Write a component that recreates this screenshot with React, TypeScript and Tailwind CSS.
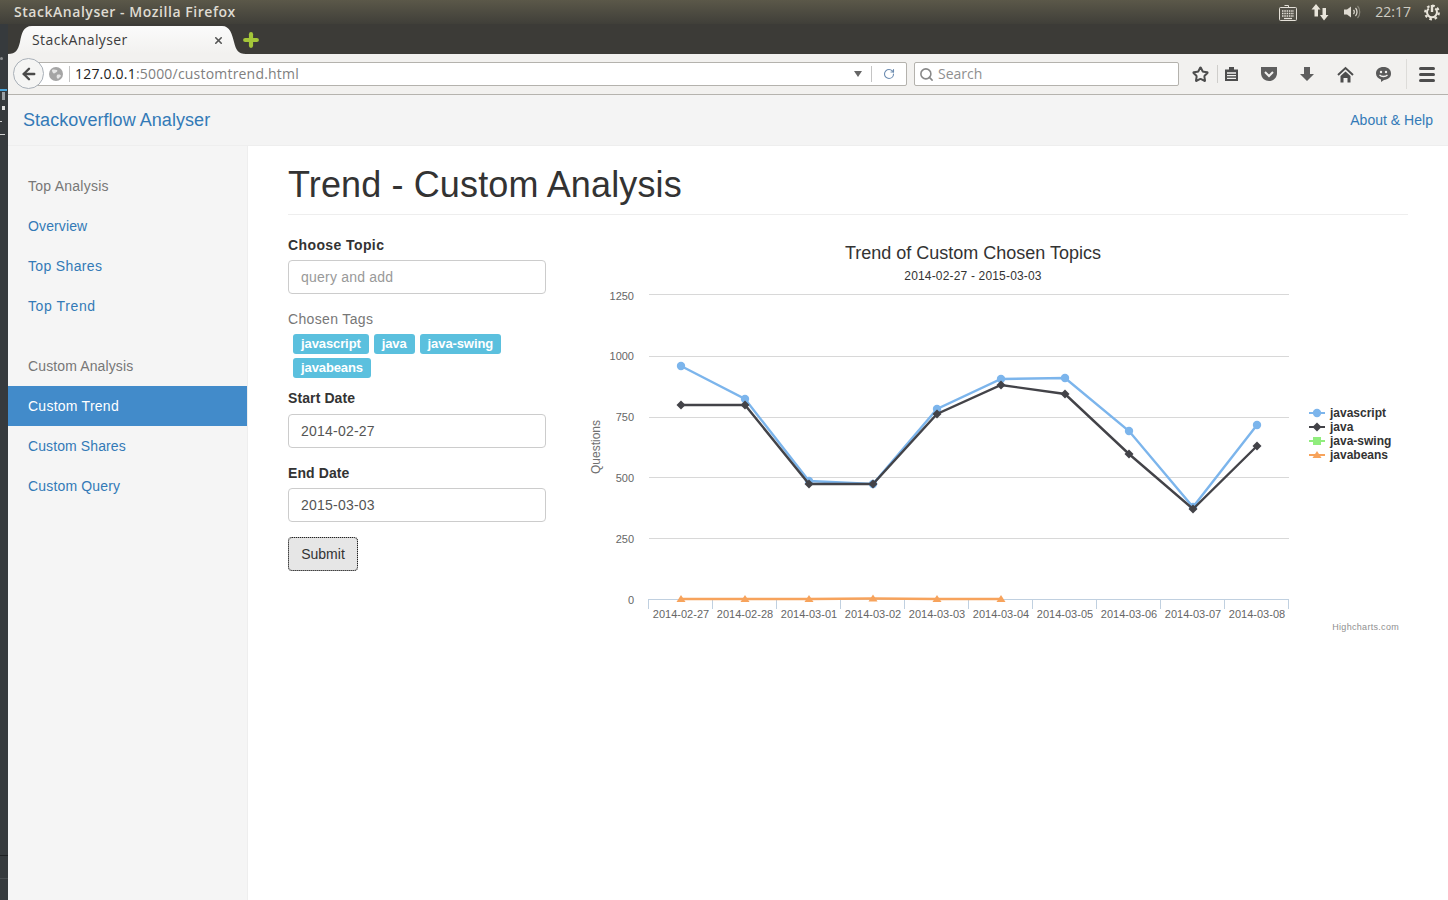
import type { ReactNode } from 'react';
import { ArrowLeft, RotateCw, Search, Star, X, Plus } from 'lucide-react';

const sans = "font-['Liberation_Sans',Arial,sans-serif]";
const ubuntu = "font-['Open_Sans','DejaVu_Sans',sans-serif]";

const xs = [681, 745, 809, 873, 937, 1001, 1065, 1129, 1193, 1257];
const jsY = [366, 399, 481, 484, 409, 379, 378, 431, 507, 425];
const javaY = [405, 405, 484, 484, 414, 385, 394, 454, 509, 446];
const beansY = [599, 599, 599, 598.5, 599, 599];
const dates = ['2014-02-27', '2014-02-28', '2014-03-01', '2014-03-02', '2014-03-03', '2014-03-04', '2014-03-05', '2014-03-06', '2014-03-07', '2014-03-08'];
const yTicks = [
  { label: '1250', y: 294.5, ty: 300 },
  { label: '1000', y: 356.5, ty: 360 },
  { label: '750', y: 417.5, ty: 421 },
  { label: '500', y: 477.5, ty: 482 },
  { label: '250', y: 538.5, ty: 543 },
  { label: '0', y: 599.5, ty: 604 },
];

function pts(ys: number[]) {
  return ys.map((y, i) => `${xs[i]},${y}`).join(' ');
}

function Chart() {
  // viewBox uses page coordinates so the numbers read straight off the screenshot
  return (
    <svg width="820" height="410" viewBox="588 235 820 410" className="block" fontFamily="Liberation Sans, Arial, sans-serif">
      <text x="973" y="259" textAnchor="middle" fontSize="18" fill="#333333">Trend of Custom Chosen Topics</text>
      <text x="973" y="280" textAnchor="middle" fontSize="12" letterSpacing="0.17" fill="#333333">2014-02-27 - 2015-03-03</text>
      <text transform="translate(600 447) rotate(-90)" textAnchor="middle" fontSize="12" fill="#707070">Questions</text>
      {yTicks.map((t) => (
        <g key={t.label}>
          {t.label !== '0' && <line x1="649" x2="1289" y1={t.y} y2={t.y} stroke="#d8d8d8" />}
          <text x="634" y={t.ty} textAnchor="end" fontSize="11" fill="#666666">{t.label}</text>
        </g>
      ))}
      <line x1="648" x2="1289" y1="599.5" y2="599.5" stroke="#c0d0e0" />
      {[...xs.map((x) => x - 32.5), 1288.5].map((x) => (
        <line key={x} x1={x} x2={x} y1="600" y2="609" stroke="#c0d0e0" />
      ))}
      {dates.map((d, i) => (
        <text key={d} x={xs[i]} y="618" textAnchor="middle" fontSize="11" fill="#666666">{d}</text>
      ))}

      <polyline points={pts(jsY)} fill="none" stroke="#7cb5ec" strokeWidth="2.4" />
      {jsY.map((y, i) => <circle key={i} cx={xs[i]} cy={y} r="4.2" fill="#7cb5ec" />)}

      <polyline points={pts(javaY)} fill="none" stroke="#434348" strokeWidth="2.4" />
      {javaY.map((y, i) => (
        <polygon key={i} points={`${xs[i]},${y - 4.5} ${xs[i] + 4.5},${y} ${xs[i]},${y + 4.5} ${xs[i] - 4.5},${y}`} fill="#434348" />
      ))}

      <polyline points={pts(beansY)} fill="none" stroke="#f7a35c" strokeWidth="2.4" />
      {beansY.map((y, i) => (
        <polygon key={i} points={`${xs[i]},${y - 4} ${xs[i] + 4.5},${y + 3} ${xs[i] - 4.5},${y + 3}`} fill="#f7a35c" />
      ))}

      {/* legend */}
      <g fontSize="12" fontWeight="700" fill="#333333">
        <line x1="1309" x2="1325" y1="413" y2="413" stroke="#7cb5ec" strokeWidth="2" />
        <circle cx="1317" cy="413" r="4.2" fill="#7cb5ec" />
        <text x="1330" y="417">javascript</text>
        <line x1="1309" x2="1325" y1="427" y2="427" stroke="#434348" strokeWidth="2" />
        <polygon points="1317,422.5 1321.5,427 1317,431.5 1312.5,427" fill="#434348" />
        <text x="1330" y="431">java</text>
        <line x1="1309" x2="1325" y1="441" y2="441" stroke="#90ed7d" strokeWidth="2" />
        <rect x="1313" y="437" width="8" height="8" fill="#90ed7d" />
        <text x="1330" y="445">java-swing</text>
        <line x1="1309" x2="1325" y1="455" y2="455" stroke="#f7a35c" strokeWidth="2" />
        <polygon points="1317,451 1321.5,458 1312.5,458" fill="#f7a35c" />
        <text x="1330" y="459">javabeans</text>
      </g>
      <text x="1399" y="630" textAnchor="end" fontSize="9" letterSpacing="0.3" fill="#909090">Highcharts.com</text>
    </svg>
  );
}

function TitleBar() {
  return (
    <div className={`h-6 flex items-center bg-gradient-to-b from-[#5b5849] to-[#403f39] text-[#dfdbd2] ${ubuntu}`}>
      <span className="ml-3.5 text-sm font-semibold tracking-[0.54px]">StackAnalyser - Mozilla Firefox</span>
      <div className="ml-auto flex items-center">
        <svg width="18" height="18" viewBox="0 0 18 18" className="mr-[14px]" fill="none" stroke="#e4e0d8">
          <path d="M9.5 4.500V2.500H5.500" />
          <rect x="0.5" y="4.500" width="17" height="13" rx="1" fill="#55534a" />
          <path d="M3 8h12M3 10.500h12M3 13h12" strokeWidth="1.500" strokeDasharray="1.500 0.800" />
          <path d="M5 15.500h8" strokeWidth="1.200" />
        </svg>
        <svg width="18" height="18" viewBox="0 0 18 18" className="mr-[14px]" fill="#e8e4da">
          <path d="M5 1l4.500 5.500H7v7H3.500v-7H.5z" />
          <path d="M13 17.500l4.500-5.500H15V5h-3.500v7H9z" />
        </svg>
        <svg width="18" height="18" viewBox="0 0 18 18" className="mr-[14px]" fill="none">
          <path d="M1 6.500h3l4-3v11l-4-3H1z" fill="#dfdbd2" />
          <path d="M10.500 7c1 1 1 3 0 4M12.500 5c2 2 2 6 0 8" stroke="#dfdbd2" strokeWidth="1.300" />
          <path d="M14.500 3c3 3 3 9 0 12" stroke="#8a877c" strokeWidth="1.200" />
        </svg>
        <span className="text-sm text-[#cfccc2] mr-[12px]">22:17</span>
        <svg width="18" height="18" viewBox="0 0 18 18" className="mr-[7px]" fill="none" stroke="#e8e4da">
          <circle cx="9" cy="9.500" r="6.800" strokeWidth="2.200" strokeDasharray="2.600 2.740" />
          <path d="M5.700 5.500a5 5 0 1 0 6.600 0" strokeWidth="2" />
          <path d="M9 2v7" strokeWidth="2.400" />
        </svg>
      </div>
    </div>
  );
}

function TabBar() {
  return (
    <div className={`h-[30px] flex bg-[#3c3b37] ${ubuntu}`}>
      <div className="relative mt-[2px] w-[238px] h-[28px] flex items-center text-[#3c3c3c]">
        <svg width="238" height="28" viewBox="0 0 238 28" className="absolute inset-0">
          <defs>
            <linearGradient id="tabFill" x1="0" y1="0" x2="0" y2="1">
              <stop offset="0" stopColor="#fbfbfb" />
              <stop offset="1" stopColor="#f2f1ef" />
            </linearGradient>
          </defs>
          <path d="M0 28C8 28 10 24 12 16 13.500 8 15 0 24 0H214C222 0 224 8 226 16 228 24 230 28 238 28Z" fill="url(#tabFill)" />
        </svg>
        <span className="relative ml-[24px] text-sm tracking-[0.4px]">StackAnalyser</span>
        <X size={11} strokeWidth={3.5} className="relative ml-auto mr-[22px] text-[#555]" />
      </div>
      <Plus size={20} strokeWidth={5} className="mt-[6px] -ml-[5px] text-[#a4c639]" />
    </div>
  );
}

function NavBar() {
  return (
    <div className={`h-[41px] flex items-center bg-[#f2f1ef] border-b border-[#b5b3ae] ${ubuntu}`}>
      <div className="relative ml-[12px] w-[887px] h-[24px] bg-white border border-[#b4b2ad] rounded-r-[2px] flex items-center">
        <div className="absolute -left-[8px] -top-[5px] w-[31px] h-[31px] rounded-full bg-[#f5f5f4] border border-[#a9b0b8] flex items-center justify-center">
          <ArrowLeft size={18} strokeWidth={3.2} className="text-[#4a4a4a]" />
        </div>
        <svg width="14" height="14" viewBox="0 0 14 14" className="ml-[28px]">
          <circle cx="7" cy="7" r="7" fill="#a5a5a5" />
          <path d="M3 3c2-1 3 0 5 0 1 1 0 2-2 3-1 1-3 0-3-3zM8 8c2-1 4 0 4 1l-3 3c-1-1-2-2-1-4z" fill="#e6e6e6" />
        </svg>
        <div className="ml-[6px] h-[16px] w-px bg-[#c4c4c4]" />
        <span className="ml-[5px] text-sm tracking-[0.2px] text-[#222]">127.0.0.1<span className="text-[#808080]">:5000/customtrend.html</span></span>
        <svg width="8" height="6" viewBox="0 0 8 6" className="ml-auto mr-[9px]"><path d="M0 0h8L4 6z" fill="#666" /></svg>
        <div className="h-[16px] w-px bg-[#c4c4c4]" />
        <RotateCw size={12} strokeWidth={2.2} className="mx-[11px] text-[#6b8bb0]" />
      </div>
      <div className="ml-[7px] w-[265px] h-[24px] bg-white border border-[#b4b2ad] rounded-[2px] flex items-center text-[#8f8f8f]">
        <Search size={15} strokeWidth={2.5} className="ml-[4px] text-[#888]" />
        <span className="ml-[4px] text-sm">Search</span>
      </div>
      <div className="flex-1 flex items-center text-[#4d4d4d]">
        <Star size={17} strokeWidth={2.8} className="ml-[13px]" />
        <div className="ml-[8px] h-[18px] w-px bg-[#cfcecb]" />
        <svg width="15" height="16" viewBox="0 0 15 16" className="ml-[6px]" fill="#4d4d4d">
          <path d="M1 3.500h13V15H1z" /><path d="M5 1h5v3.500H5z" />
          <path d="M3 7h9M3 9.700h9M3 12.400h9" stroke="#f2f1ef" strokeWidth="1.300" />
        </svg>
        <svg width="18" height="16" viewBox="0 0 18 16" className="ml-[21px]">
          <path d="M1 1h16v6c0 5-4 8-8 8s-8-3-8-8z" fill="#5e5e5e" />
          <path d="M5 6l4 4 4-4" fill="none" stroke="#f2f1ef" strokeWidth="2" />
        </svg>
        <svg width="14" height="16" viewBox="0 0 14 16" className="ml-[22px]" fill="#5e5e5e"><path d="M4 1h6v7h4l-7 7-7-7h4z" /></svg>
        <svg width="17" height="17" viewBox="0 0 17 17" className="ml-[23px]" fill="#4d4d4d">
          <path d="M1 9l7.500-7L16 9" fill="none" stroke="#4d4d4d" strokeWidth="2" />
          <path d="M3.500 10l5-4.500 5 4.500v6.500h-3V12h-4v4.500h-3z" />
        </svg>
        <svg width="17" height="17" viewBox="0 0 17 17" className="ml-[21px]">
          <path d="M8.500 1c4.500 0 7.500 2.500 7.500 6.500s-3 6-7 6.500l-3 2v-2.500C3 12.500 1 10.500 1 7.500 1 3.500 4 1 8.500 1z" fill="#5a5a5a" />
          <circle cx="6" cy="6" r="1.200" fill="#f2f1ef" /><circle cx="11" cy="6" r="1.200" fill="#f2f1ef" />
          <path d="M4.500 9c2 2 6 2 8 0" stroke="#f2f1ef" strokeWidth="1.300" fill="none" />
        </svg>
        <div className="ml-auto h-[30px] w-px bg-[#dddcd9]" />
        <div className="ml-[12px] mr-[13px] flex flex-col gap-[3px]">
          <div className="w-[16px] h-[3px] rounded-sm bg-[#4d4d4d]" />
          <div className="w-[16px] h-[3px] rounded-sm bg-[#4d4d4d]" />
          <div className="w-[16px] h-[3px] rounded-sm bg-[#4d4d4d]" />
        </div>
      </div>
    </div>
  );
}

// the sliver of the Unity launcher that shows down the left edge
function Launcher() {
  return (
    <div className="w-2 shrink-0 bg-[#363a3d] flex flex-col">
      <div className="mt-[33px] ml-0 w-[3px] h-[3px] rounded-full bg-[#8a8d8f]" />
      <div className="mt-[29px] w-[7px] h-[2px] bg-[#4aa3d8]" />
      <div className="mt-[1px] ml-[2px] w-[3px] h-[8px] bg-[#9aa0a4]" />
      <div className="mt-[6px] ml-[2px] w-[3px] h-[4px] bg-[#e0e0e0]" />
      <div className="mt-[11px] w-[2px] h-px bg-[#d0d0d0]" />
      <div className="mt-[12px] w-[5px] h-px bg-[#d0d0d0]" />
      <div className="mt-[720px] h-px bg-[#1f2123]" />
      <div className="mt-[22px] h-px bg-[#4a4e51]" />
    </div>
  );
}

// tracking differs per row: the original's hinted glyph advances don't scale evenly
function SideItem({ label, active, muted, className }: { label: string; active?: boolean; muted?: boolean; className?: string }) {
  return (
    <div className={`h-10 pl-5 flex items-center text-sm ${active ? 'bg-[#428bca] text-white' : muted ? 'text-[#777]' : 'text-[#337ab7]'} ${className ?? ''}`}>
      {label}
    </div>
  );
}

function FieldLabel({ children, className }: { children: ReactNode; className?: string }) {
  return <div className={`text-sm font-bold text-[#333] leading-5 ${className ?? ''}`}>{children}</div>;
}

function TextBox({ value, placeholder, className }: { value?: string; placeholder?: string; className?: string }) {
  return (
    <div className={`h-[34px] px-3 flex items-center bg-white border border-[#ccc] rounded text-sm tracking-[0.22px] ${placeholder ? 'text-[#999]' : 'text-[#555]'} ${className ?? ''}`}>
      {value ?? placeholder}
    </div>
  );
}

function Tag({ label }: { label: string }) {
  return <span className="h-5 px-2 flex items-center rounded-[3px] bg-[#5bc0de] text-white text-[13px] font-bold tracking-[-0.1px]">{label}</span>;
}

export default function App() {
  return (
    <div className={`w-[1448px] h-[900px] overflow-hidden bg-white flex flex-col ${sans}`}>
      <TitleBar />
      <div className="flex-1 flex min-h-0">
        <Launcher />
        <div className="flex-1 flex flex-col min-w-0">
          <TabBar />
          <NavBar />
          <div className="h-[51px] flex items-center justify-between bg-[#f4f4f4] border-b border-[#eeeeee] px-[15px] text-[#337ab7]">
            <span className="text-lg tracking-[0.05px]">Stackoverflow Analyser</span>
            <span className="text-sm tracking-[0.02px]">About &amp; Help</span>
          </div>
          <div className="flex-1 flex min-h-0">
            <div className="w-[240px] bg-[#f5f5f5] border-r border-[#eee] pt-5">
              <SideItem label="Top Analysis" muted className="tracking-[0.25px]" />
              <SideItem label="Overview" className="tracking-[0.12px]" />
              <SideItem label="Top Shares" className="tracking-[0.35px]" />
              <SideItem label="Top Trend" className="tracking-[0.6px]" />
              <div className="h-5" />
              <SideItem label="Custom Analysis" muted className="tracking-[0.12px]" />
              <SideItem label="Custom Trend" active className="tracking-[0.25px]" />
              <SideItem label="Custom Shares" className="tracking-[0.1px]" />
              <SideItem label="Custom Query" className="tracking-[0.17px]" />
            </div>
            <div className="flex-1 px-10 min-w-0">
              <h1 className="h-[69px] pt-[16px] text-[36px] leading-[46px] tracking-[0.13px] text-[#333] border-b border-[#eee]">Trend - Custom Analysis</h1>
              <div className="flex">
                <div className="w-[258px] pt-5">
                  <FieldLabel className="tracking-[0.4px]">Choose Topic</FieldLabel>
                  <TextBox className="mt-[5px]" placeholder="query and add" />
                  <div className="mt-[15px] text-sm leading-5 tracking-[0.35px] text-[#777]">Chosen Tags</div>
                  <div className="mt-[5px] pl-[5px] flex flex-wrap gap-x-[5px] gap-y-[4px] w-[230px]">
                    <Tag label="javascript" />
                    <Tag label="java" />
                    <Tag label="java-swing" />
                    <Tag label="javabeans" />
                  </div>
                  <FieldLabel className="mt-[10px] tracking-[0.1px]">Start Date</FieldLabel>
                  <TextBox className="mt-[6px]" value="2014-02-27" />
                  <FieldLabel className="mt-[15px] tracking-[0.1px]">End Date</FieldLabel>
                  <TextBox className="mt-[5px]" value="2015-03-03" />
                  <div className="mt-[15px] w-[70px] h-[34px] flex items-center justify-center rounded bg-[#e6e6e6] border border-[#adadad] outline-1 outline-dotted outline-[#222] -outline-offset-1 text-sm text-[#333]">Submit</div>
                </div>
                <div className="ml-[42px] mt-5 -mr-[40px]"><Chart /></div>
              </div>
            </div>
          </div>
        </div>
      </div>
    </div>
  );
}
